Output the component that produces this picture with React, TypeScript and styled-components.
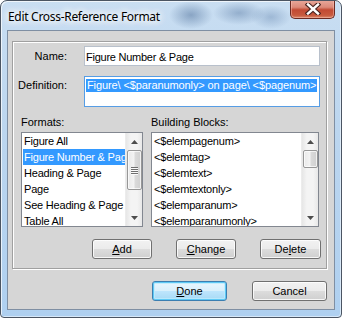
import React from "react";
import styled, { createGlobalStyle } from "styled-components";

const Global = createGlobalStyle`
  html, body { margin: 0; padding: 0; background: #ffffff; }
  body { width: 342px; height: 318px; overflow: hidden; }
  * { box-sizing: border-box; }
`;

const Window = styled.div`
  width: 342px;
  height: 318px;
  border: 1px solid #4b5563;
  border-radius: 7px 7px 4px 4px;
  overflow: hidden;
  display: flex;
  flex-direction: column;
  position: relative;
  background:
    radial-gradient(ellipse 22px 14px at 190px 14px, rgba(60,95,140,0.45), transparent),
    radial-gradient(ellipse 26px 12px at 238px 12px, rgba(70,105,150,0.40), transparent),
    radial-gradient(ellipse 20px 12px at 270px 16px, rgba(80,115,160,0.35), transparent),
    linear-gradient(180deg, #c9def2 0%, #bcd6ef 40%, #afd0f0 100%);
  box-shadow: inset 1px 1px 0 rgba(255,255,255,0.7), inset -1px -1px 0 rgba(255,255,255,0.5);
  font-family: "Liberation Sans", Arial, sans-serif;
`;

const TitleBar = styled.div`
  height: 29px;
  display: flex;
  align-items: flex-start;
  justify-content: space-between;
  padding-left: 7px;
`;

const Title = styled.div`
  margin-top: 8px;
  font-family: "Noto Sans", "Open Sans", sans-serif;
  font-size: 12px;
  line-height: 15px;
  color: #000;
  letter-spacing: -0.3px;
  text-shadow: 0 0 6px #fff, 0 0 8px #fff, 0 0 10px #fff, 0 0 12px rgba(255,255,255,0.8);
`;

const CloseButton = styled.div`
  width: 45px;
  height: 19px;
  margin-right: 6px;
  margin-top: -1px;
  border: 1px solid #6a2a22;
  border-top: none;
  border-radius: 0 0 5px 5px;
  background: linear-gradient(180deg, #e9a99c 0%, #dc8a7a 40%, #c24a33 55%, #c75a3e 85%, #d98a6c 100%);
  box-shadow: inset 0 0 0 1px rgba(255,200,190,0.45);
  display: flex;
  align-items: center;
  justify-content: center;
`;

const Client = styled.div`
  flex: 1;
  margin: 0 6px 7px 6px;
  background: #d6d6d6;
  border: 1px solid #7f8fa3;
  display: flex;
  flex-direction: column;
  padding: 10px 7px 0 4px;
`;

const Group = styled.div`
  height: 228px;
  border: 1px solid #a0a0a0;
  box-shadow: 1px 1px 0 #ffffff, inset 1px 1px 0 #ffffff;
  display: flex;
  flex-direction: column;
  padding: 4px 4px 0 0;
`;

const FieldRow = styled.div<{ $gap?: number }>`
  display: grid;
  grid-template-columns: 71px 236px;
  align-items: start;
  margin-top: ${(p) => p.$gap ?? 0}px;
`;

const Label = styled.div<{ $top: number }>`
  text-align: right;
  padding-right: 17px;
  padding-top: ${(p) => p.$top}px;
  font-size: 11px;
  line-height: 13px;
  color: #000;
`;

const TextBox = styled.div<{ $h: number; $focus?: boolean }>`
  height: ${(p) => p.$h}px;
  background: #fff;
  border: 1px solid ${(p) => (p.$focus ? "#569de5" : "#b8c0cb")};
  padding: 2px 1px 0 1px;
  font-size: 11px;
  line-height: 13px;
  color: #000;
  white-space: nowrap;
  overflow: hidden;
`;

const NameText = styled.span`
  display: inline-block;
  padding-top: 2px;
  letter-spacing: -0.25px;
`;

const Selected = styled.span`
  display: inline-block;
  background: #3399ff;
  color: #fff;
  padding: 0 1px;
  letter-spacing: -0.1px;
`;

const ListsRow = styled.div`
  display: flex;
  gap: 8px;
  padding-left: 8px;
  margin-top: 8px;
`;

const ListCol = styled.div<{ $w: number }>`
  width: ${(p) => p.$w}px;
  display: flex;
  flex-direction: column;
`;

const ListLabel = styled.div`
  font-size: 11px;
  line-height: 13px;
  height: 17px;
  padding-top: 1px;
  color: #000;
`;

const ListBox = styled.div`
  height: 95px;
  border: 1px solid #828790;
  background: #fff;
  display: flex;
  overflow: hidden;
`;

const Items = styled.div`
  flex: 1;
  min-width: 0;
  display: flex;
  flex-direction: column;
  padding-left: 1px;
  overflow: hidden;
`;

const Item = styled.div<{ $sel?: boolean }>`
  height: 16px;
  flex-shrink: 0;
  line-height: 16px;
  font-size: 11px;
  padding-left: 1px;
  white-space: nowrap;
  overflow: hidden;
  letter-spacing: -0.2px;
  background: ${(p) => (p.$sel ? "#3399ff" : "transparent")};
  color: ${(p) => (p.$sel ? "#fff" : "#000")};
`;

const ScrollBar = styled.div`
  width: 17px;
  flex-shrink: 0;
  display: flex;
  flex-direction: column;
  align-items: center;
  background: linear-gradient(90deg, #e6e6e6 0%, #f4f4f4 30%, #f4f4f4 70%, #e8e8e8 100%);
  border-left: 1px solid #ececec;
`;

const Arrow = styled.div`
  height: 17px;
  width: 100%;
  display: flex;
  align-items: center;
  justify-content: center;
  flex-shrink: 0;
`;

const Track = styled.div`
  flex: 1;
  width: 100%;
  display: flex;
  flex-direction: column;
  align-items: center;
`;

const Thumb = styled.div<{ $h: number }>`
  width: 15px;
  height: ${(p) => p.$h}px;
  border: 1px solid #979797;
  border-radius: 2px;
  background: linear-gradient(90deg, #e9e9e9 0%, #f3f3f3 45%, #dadada 55%, #d0d0d0 100%);
  box-shadow: inset 0 0 0 1px rgba(255,255,255,0.7);
  display: flex;
  flex-direction: column;
  align-items: center;
  justify-content: center;
  gap: 1px;
`;

const Grip = styled.div`
  width: 7px;
  height: 1px;
  background: #6f6f6f;
  box-shadow: 0 1px 0 #fafafa;
`;

const ButtonRow = styled.div<{ $pr: number; $gap: number; $mt: number }>`
  display: flex;
  justify-content: flex-end;
  gap: ${(p) => p.$gap}px;
  padding-right: ${(p) => p.$pr}px;
  margin-top: ${(p) => p.$mt}px;
`;

const Button = styled.div<{ $w: number; $default?: boolean }>`
  width: ${(p) => p.$w}px;
  height: 20px;
  border: 1px solid ${(p) => (p.$default ? "#3c7fb1" : "#707070")};
  border-radius: 3px;
  background: ${(p) =>
    p.$default
      ? "linear-gradient(180deg, #eaf6fd 0%, #d9f0fc 50%, #bee6fd 50%, #a7d9f5 100%)"
      : "linear-gradient(180deg, #f2f2f2 0%, #ebebeb 50%, #dddddd 50%, #cfcfcf 100%)"};
  box-shadow: ${(p) =>
    p.$default
      ? "inset 0 0 0 1px #5ec9f5, inset 0 0 0 2px rgba(190,235,252,0.8)"
      : "inset 0 0 0 1px rgba(255,255,255,0.8)"};
  display: flex;
  align-items: center;
  justify-content: center;
  font-size: 11px;
  line-height: 13px;
  color: #000;
`;

const Up = () => (
  <svg width="7" height="4" viewBox="0 0 7 4">
    <path d="M3.5 0 L7 4 L0 4 Z" fill="#4d4d4d" />
  </svg>
);
const Down = () => (
  <svg width="7" height="4" viewBox="0 0 7 4">
    <path d="M0 0 L7 0 L3.5 4 Z" fill="#4d4d4d" />
  </svg>
);

const CloseX = () => (
  <svg width="16" height="12" viewBox="0 0 16 12">
    <path d="M3 1.5 L13 10.5 M13 1.5 L3 10.5" stroke="#4a2420" strokeWidth="4.6" strokeLinecap="square" />
    <path d="M3 1.5 L13 10.5 M13 1.5 L3 10.5" stroke="#ffffff" strokeWidth="2.4" strokeLinecap="square" />
  </svg>
);

const formats = [
  "Figure All",
  "Figure Number & Page",
  "Heading & Page",
  "Page",
  "See Heading & Page",
  "Table All",
];

const blocks = [
  "<$elempagenum>",
  "<$elemtag>",
  "<$elemtext>",
  "<$elemtextonly>",
  "<$elemparanum>",
  "<$elemparanumonly>",
];

export default function App() {
  return (
    <>
      <Global />
      <Window>
        <TitleBar>
          <Title>Edit Cross-Reference Format</Title>
          <CloseButton>
            <CloseX />
          </CloseButton>
        </TitleBar>
        <Client>
          <Group>
            <FieldRow>
              <Label $top={4}>Name:</Label>
              <TextBox $h={20}>
                <NameText>Figure Number &amp; Page</NameText>
              </TextBox>
            </FieldRow>
            <FieldRow $gap={10}>
              <Label $top={3}>Definition:</Label>
              <TextBox $h={31} $focus>
                <Selected>Figure\ &lt;$paranumonly&gt; on page\ &lt;$pagenum&gt;</Selected>
              </TextBox>
            </FieldRow>
            <ListsRow>
              <ListCol $w={122}>
                <ListLabel>Formats:</ListLabel>
                <ListBox>
                  <Items>
                    {formats.map((f, i) => (
                      <Item key={f} $sel={i === 1}>
                        {f}
                      </Item>
                    ))}
                  </Items>
                  <ScrollBar>
                    <Arrow>
                      <Up />
                    </Arrow>
                    <Track>
                      <Thumb $h={40}>
                        <Grip />
                        <Grip />
                        <Grip />
                        <Grip />
                      </Thumb>
                    </Track>
                    <Arrow>
                      <Down />
                    </Arrow>
                  </ScrollBar>
                </ListBox>
              </ListCol>
              <ListCol $w={168}>
                <ListLabel>Building Blocks:</ListLabel>
                <ListBox>
                  <Items>
                    {blocks.map((b) => (
                      <Item key={b}>{b}</Item>
                    ))}
                  </Items>
                  <ScrollBar>
                    <Arrow>
                      <Up />
                    </Arrow>
                    <Track>
                      <Thumb $h={18} />
                    </Track>
                    <Arrow>
                      <Down />
                    </Arrow>
                  </ScrollBar>
                </ListBox>
              </ListCol>
            </ListsRow>
            <ButtonRow $pr={1} $gap={24} $mt={12}>
              <Button $w={60}>
                <span><u>A</u>dd</span>
              </Button>
              <Button $w={60}>
                <span><u>C</u>hange</span>
              </Button>
              <Button $w={61}>
                <span>De<u>l</u>ete</span>
              </Button>
            </ButtonRow>
          </Group>
          <ButtonRow $pr={0} $gap={25} $mt={12}>
            <Button $w={75} $default>
              <span><u>D</u>one</span>
            </Button>
            <Button $w={75}>
              <span>Cancel</span>
            </Button>
          </ButtonRow>
        </Client>
      </Window>
    </>
  );
}
